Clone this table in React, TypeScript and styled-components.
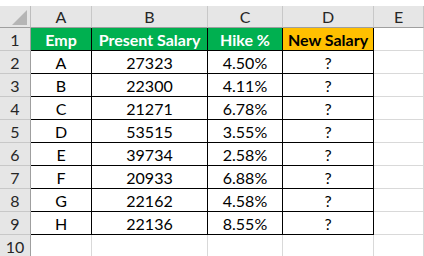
import React from "react";
import styled, { createGlobalStyle, css } from "styled-components";

const Global = createGlobalStyle`
  html, body { margin: 0; padding: 0; background: #ffffff; }
  body { font-family: Lato, "Open Sans", sans-serif; }
`;

const Page = styled.div`
  width: 424px;
  height: 256px;
  overflow: hidden;
  padding-top: 6px;
  box-sizing: border-box;
  background: #ffffff;
`;

const Sheet = styled.div`
  display: grid;
  grid-template-columns: 31px 61px 116px 75px 91px 1fr;
  grid-template-rows: 22px repeat(10, 23px);
  font-family: Lato, "Open Sans", sans-serif;
  font-size: 16px;
  color: #000;
`;

const Cell = styled.div`
  box-sizing: border-box;
  display: flex;
  align-items: center;
  justify-content: center;
  white-space: nowrap;
  border-right: 1px solid #d9d9d9;
  border-bottom: 1px solid #d9d9d9;
`;

const Corner = styled(Cell)`
  background: #e6e6e6;
  border-right: 1px solid #bdbdbd;
  border-bottom: 1px solid #9f9f9f;
  justify-content: flex-end;
  align-items: flex-end;
  padding: 0 3px 2px 0;
`;

const ColHead = styled(Cell)`
  background: #e6e6e6;
  color: #262626;
  border-right: 1px solid #c8c8c8;
  border-bottom: 1px solid #9f9f9f;
`;

const RowHead = styled(Cell)`
  background: #e6e6e6;
  color: #262626;
  border-right: 1px solid #9f9f9f;
  border-bottom: 1px solid #c8c8c8;
`;

const DataCell = styled(Cell)<{ $head?: "green" | "orange" }>`
  border-right: 1px solid #000;
  border-bottom: 1px solid #000;
  ${(p) =>
    p.$head === "green" &&
    css`
      background: #00b050;
      color: #ffffff;
      font-weight: 700;
    `}
  ${(p) =>
    p.$head === "orange" &&
    css`
      background: #ffc000;
      color: #000000;
      font-weight: 700;
    `}
`;

const EmptyCell = styled(Cell)``;

const headers: { text: string; kind: "green" | "orange" }[] = [
  { text: "Emp", kind: "green" },
  { text: "Present Salary", kind: "green" },
  { text: "Hike %", kind: "green" },
  { text: "New Salary", kind: "orange" },
];

const rows = [
  ["A", "27323", "4.50%", "?"],
  ["B", "22300", "4.11%", "?"],
  ["C", "21271", "6.78%", "?"],
  ["D", "53515", "3.55%", "?"],
  ["E", "39734", "2.58%", "?"],
  ["F", "20933", "6.88%", "?"],
  ["G", "22162", "4.58%", "?"],
  ["H", "22136", "8.55%", "?"],
];

export default function App() {
  return (
    <Page>
      <Global />
      <Sheet>
        <Corner>
          <svg width="15" height="15" viewBox="0 0 15 15">
            <polygon points="15,0 15,15 0,15" fill="#b5b5b5" />
          </svg>
        </Corner>
        {["A", "B", "C", "D", "E"].map((c) => (
          <ColHead key={c}>{c}</ColHead>
        ))}

        <RowHead>1</RowHead>
        {headers.map((h) => (
          <DataCell key={h.text} $head={h.kind}>
            {h.text}
          </DataCell>
        ))}
        <EmptyCell />

        {rows.map((r, i) => (
          <React.Fragment key={i}>
            <RowHead>{i + 2}</RowHead>
            {r.map((v, j) => (
              <DataCell key={j}>{v}</DataCell>
            ))}
            <EmptyCell />
          </React.Fragment>
        ))}

        <RowHead>10</RowHead>
        {[0, 1, 2, 3, 4].map((k) => (
          <EmptyCell key={k} />
        ))}
      </Sheet>
    </Page>
  );
}
